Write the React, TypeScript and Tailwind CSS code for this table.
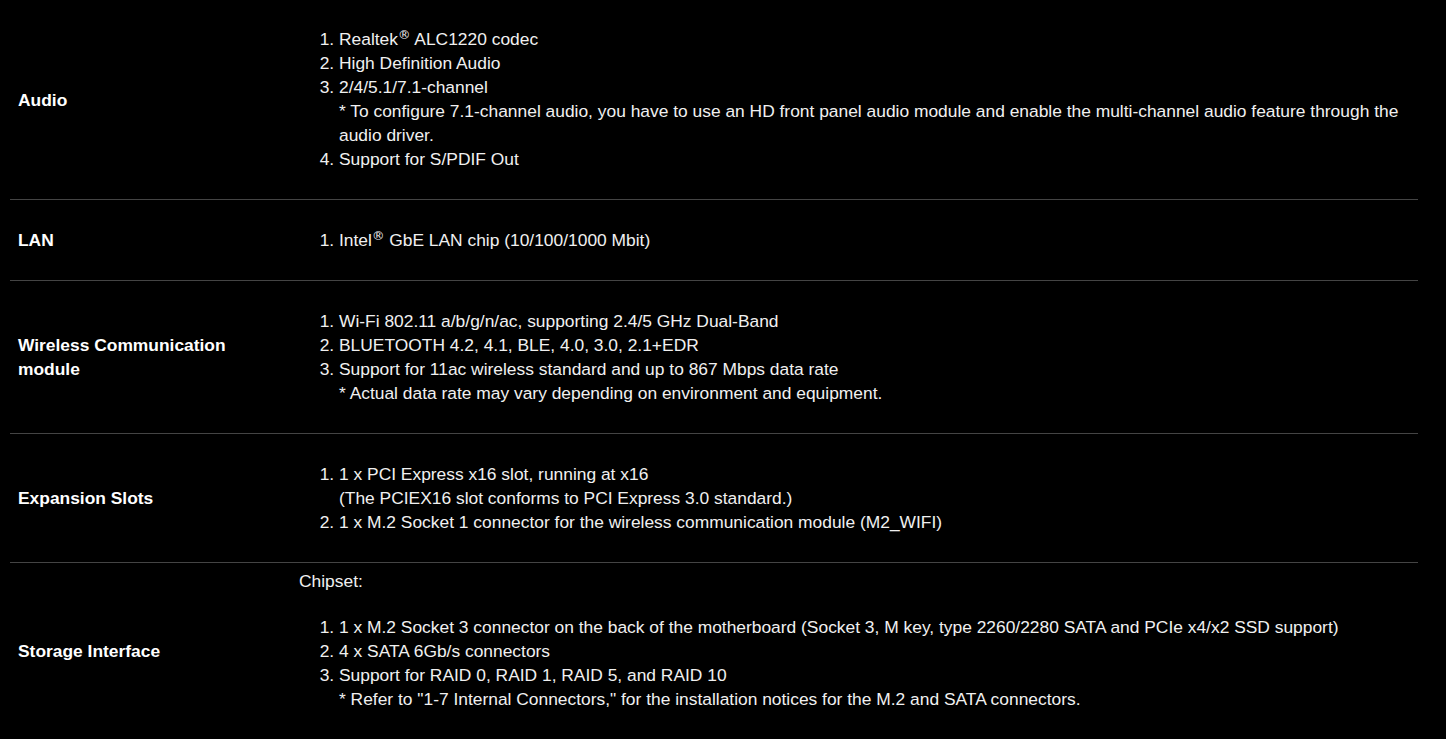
import React from "react";

type Item = { text: React.ReactNode; notes?: string[] };

type Spec = {
  label: string;
  items: Item[];
  intro?: string;
};

// registered mark, sized to sit like the reference
const Reg = () => (
  <span
    className="inline-block align-[6px] text-[12.5px] leading-none"
    style={{ fontFamily: '"DejaVu Sans", sans-serif' }}
  >
    ®
  </span>
);

const specs: Spec[] = [
  {
    label: "Audio",
    items: [
      { text: <>Realtek<Reg /> ALC1220 codec</> },
      { text: "High Definition Audio" },
      {
        text: "2/4/5.1/7.1-channel",
        notes: [
          "* To configure 7.1-channel audio, you have to use an HD front panel audio module and enable the multi-channel audio feature through the audio driver.",
        ],
      },
      { text: "Support for S/PDIF Out" },
    ],
  },
  {
    label: "LAN",
    items: [{ text: <>Intel<Reg /> GbE LAN chip (10/100/1000 Mbit)</> }],
  },
  {
    label: "Wireless Communication module",
    items: [
      { text: "Wi-Fi 802.11 a/b/g/n/ac, supporting 2.4/5 GHz Dual-Band" },
      { text: "BLUETOOTH 4.2, 4.1, BLE, 4.0, 3.0, 2.1+EDR" },
      {
        text: "Support for 11ac wireless standard and up to 867 Mbps data rate",
        notes: ["* Actual data rate may vary depending on environment and equipment."],
      },
    ],
  },
  {
    label: "Expansion Slots",
    items: [
      {
        text: "1 x PCI Express x16 slot, running at x16",
        notes: ["(The PCIEX16 slot conforms to PCI Express 3.0 standard.)"],
      },
      { text: "1 x M.2 Socket 1 connector for the wireless communication module (M2_WIFI)" },
    ],
  },
  {
    label: "Storage Interface",
    intro: "Chipset:",
    items: [
      {
        text: "1 x M.2 Socket 3 connector on the back of the motherboard (Socket 3, M key, type 2260/2280 SATA and PCIe x4/x2 SSD support)",
      },
      { text: "4 x SATA 6Gb/s connectors" },
      {
        text: "Support for RAID 0, RAID 1, RAID 5, and RAID 10",
        notes: ['* Refer to "1-7 Internal Connectors," for the installation notices for the M.2 and SATA connectors.'],
      },
    ],
  },
];

const SpecRow = ({ spec, first }: { spec: Spec; first: boolean }) => {
  return (
    <div className="grid grid-cols-[281px_1fr] border-b border-[#444]">
      <div className="flex items-center px-2 font-bold text-white">
        {spec.label}
      </div>
      <div
        className={
          spec.intro
            ? "px-2 pt-[6px] pb-[28px]"
            : first
            ? "px-2 pt-[27px] pb-[28px]"
            : "px-2 py-[28px]"
        }
      >
        {spec.intro && <div>{spec.intro}</div>}
        <ol className={spec.intro ? "mt-[22px] list-decimal pl-10" : "list-decimal pl-10"}>
          {spec.items.map((item, i) => (
            <li key={i}>
              {item.text}
              {item.notes?.map((n, j) => (
                <div key={j}>{n}</div>
              ))}
            </li>
          ))}
        </ol>
      </div>
    </div>
  );
};

export default function App() {
  return (
    <main
      className="min-h-screen bg-black text-[17.4px] leading-6 text-[#f0f0f0]"
      style={{ fontFamily: '"Liberation Sans", Arial, sans-serif' }}
    >
      <div className="ml-[10px] w-[1408px]">
        {specs.map((s, i) => (
          <SpecRow key={s.label} spec={s} first={i === 0} />
        ))}
      </div>
    </main>
  );
}
